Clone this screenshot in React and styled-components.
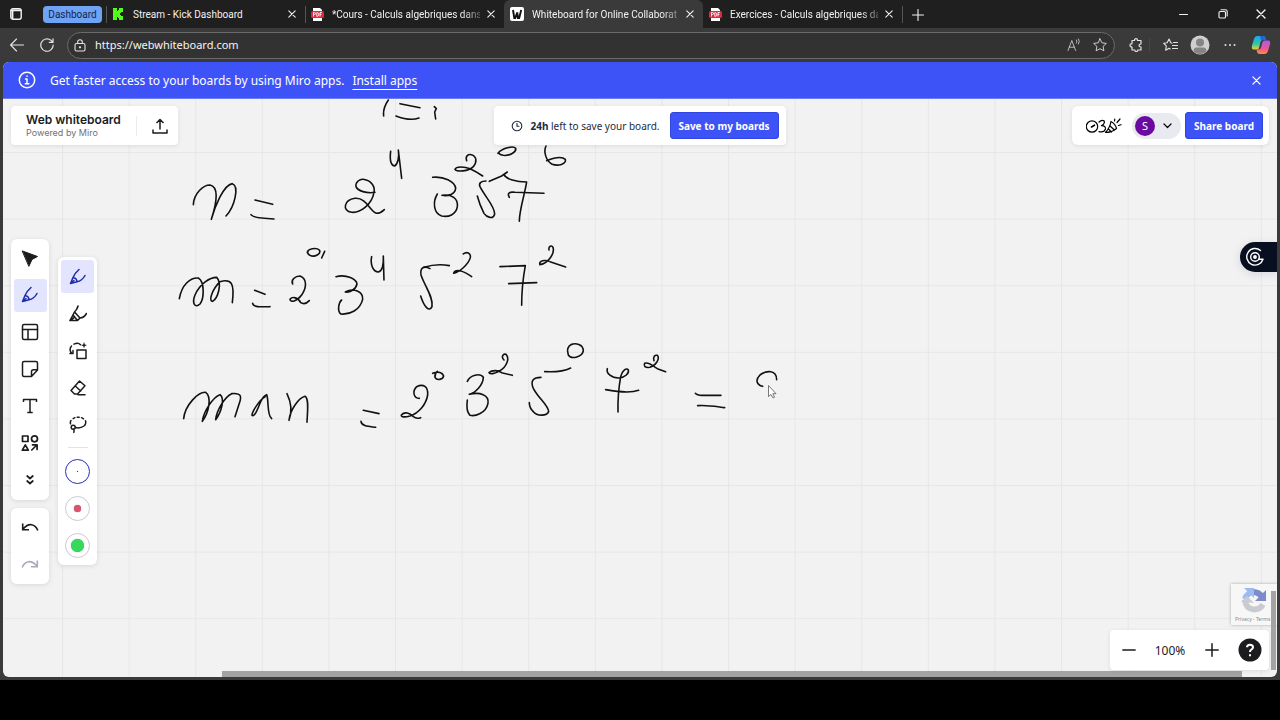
import React from "react";
import styled, { createGlobalStyle, css } from "styled-components";

const GlobalStyle = createGlobalStyle`
  *, *::before, *::after { box-sizing: border-box; }
  html, body { margin: 0; background: #000; }
  button, input { font: inherit; color: inherit; }
`;

const Page = styled.div`
  min-height: 100vh;
  display: flex;
  flex-direction: column;
  padding-bottom: 40px;
  background: #000;
  font-family: "Noto Sans", sans-serif;
`;

const BrowserWindow = styled.div`
  flex: 1;
  display: flex;
  flex-direction: column;
  background: #3a3a3a;
`;

const IconButton = styled.button`
  display: flex;
  align-items: center;
  justify-content: center;
  flex: none;
  width: ${(p) => p.$w || 20}px;
  height: ${(p) => p.$h || 20}px;
  padding: 0;
  border: 0;
  background: none;
  color: inherit;
`;

/* ---------- tab strip ---------- */

const TabStrip = styled.header`
  display: flex;
  align-items: stretch;
  height: 28px;
  background: #1f1f1f;
  color: #f2f2f2;
  font: 10px/27px Roboto, sans-serif;
`;

const TabMenu = styled.div`
  display: flex;
  align-items: center;
  gap: 19px;
  width: 106px;
  padding-left: 8px;
`;

const GroupChip = styled.button`
  height: 17px;
  padding: 0;
  width: 59px;
  border: 0;
  border-radius: 4px;
  background: #6ea3f5;
  color: #10254d;
  line-height: 17px;
`;

const Tab = styled.div`
  display: flex;
  align-items: center;
  gap: 8px;
  flex: 0 1 199px;
  min-width: 0;
  padding: 0 6px;
  position: relative;
  ${(p) =>
    p.$active
      ? css`
          background: #3a3a3a;
          border-radius: 6px 6px 0 0;
        `
      : css`
          &::before {
            content: "";
            position: absolute;
            left: 0;
            top: 6px;
            width: 1px;
            height: 17px;
            background: ${p.$plain ? "transparent" : "#555"};
          }
        `}
`;

const TabTitle = styled.span`
  flex: 1;
  min-width: 0;
  margin-right: -4px;
  white-space: nowrap;
  mask-image: ${(p) => (p.$fade ? "linear-gradient(to right, #000 88%, transparent 105%)" : "none")};
`;

const NewTab = styled.div`
  display: flex;
  align-items: center;
  padding-left: 5px;
  margin: 6px 0 5px;
  border-left: 1px solid #555;
`;

const WindowControls = styled.div`
  display: flex;
  align-items: center;
  margin-left: auto;
`;

/* ---------- address row ---------- */

const AddressRow = styled.div`
  display: flex;
  align-items: center;
  height: 34px;
  padding: 0 8px 0 7px;
  color: #e4e4e4;
`;

const NavButtons = styled.div`
  display: flex;
  gap: 10px;
`;

const AddressBox = styled.div`
  flex: 1;
  display: flex;
  align-items: center;
  height: 27px;
  margin: 0 8px 0 10px;
  padding: 0 1px 0 5px;
  border: 1px solid #6b6b6b;
  border-radius: 14px;
  background: #323232;
`;

const AddressInput = styled.input`
  flex: 1;
  min-width: 0;
  padding: 0 0 0 8px;
  border: 0;
  outline: 0;
  background: none;
  color: #f4f4f4;
  font: 11px/20px "Noto Sans", sans-serif;
`;

const Divider = styled.span`
  flex: none;
  width: 1px;
  height: ${(p) => p.$h || 12}px;
  background: ${(p) => p.$color || "#484848"};
`;

/* ---------- web page ---------- */

const Viewport = styled.div`
  flex: 1;
  display: flex;
  flex-direction: column;
  margin: 0 3px 3px;
  border-radius: 6px;
  overflow: hidden;
  background: #f2f2f2;
`;

const Banner = styled.div`
  display: flex;
  align-items: center;
  height: 37px;
  padding: 0 11px 0 15px;
  background: #3d53f8;
  border-bottom: 1px solid #6d7cf0;
  color: #fff;
  font-size: 12px;
  line-height: 17px;
`;

const BannerText = styled.span`
  margin: 0 8px 0 14px;
`;

const BannerLink = styled.a`
  color: #fff;
  text-decoration: underline 1px;
  text-underline-offset: 4px;
  text-decoration-skip-ink: none;
`;

const Push = styled.span`
  margin-left: auto;
`;

const Board = styled.main`
  flex: 1;
  position: relative;
  display: flex;
  flex-direction: column;
  padding: 7px 8px 0;
`;

const Ink = styled.svg`
  position: absolute;
  inset: 0;
  width: 100%;
  height: 100%;
`;

const TopPanels = styled.div`
  position: relative;
  display: grid;
  grid-template-columns: 1fr auto 1fr;
  align-items: center;
`;

const Panel = styled.section`
  display: flex;
  align-items: center;
  height: 39px;
  background: #fff;
  border-radius: 4px;
  box-shadow: 0 1px 4px rgba(30, 30, 50, 0.1);
`;

const TitlePanel = styled(Panel)`
  justify-self: start;
  padding: 0 1px 0 15px;
`;

const BoardName = styled.h1`
  margin: 0;
  color: #1c1c1e;
  font: 600 12px/14px Inter, sans-serif;
`;

const PoweredBy = styled.p`
  margin: 0;
  color: #6f7078;
  font: 9px/11px Inter, sans-serif;
`;

const TitleText = styled.div`
  margin-right: 15px;
`;

const ExportSlot = styled.div`
  margin-left: 7px;
`;

const SavePanel = styled(Panel)`
  padding: 0 7px 0 17px;
  color: #222a3f;
  font-size: 10px;
`;

const SaveText = styled.p`
  margin: 0 10px 0 7px;
`;

const PrimaryButton = styled.button`
  height: 27px;
  padding: 0;
  width: ${(p) => p.$w}px;
  border: 1px solid #2f45dd;
  border-radius: 3px;
  background: #3d53f8;
  color: #fff;
  font-size: 10px;
  font-weight: 700;
  white-space: nowrap;
`;

const SharePanel = styled(Panel)`
  justify-self: end;
  padding: 0 6px 0 14px;
  border-radius: 6px;
`;

const UserMenu = styled.button`
  display: flex;
  align-items: center;
  gap: 8px;
  height: 26px;
  width: 49px;
  margin: 0 4px 0 10px;
  padding: 0 0 0 3px;
  border: 0;
  border-radius: 13px;
  background: #e9eaef;
`;

const Avatar = styled.span`
  width: 20px;
  height: 20px;
  border-radius: 50%;
  background: #6a0aa0;
  color: #fff;
  font-size: 11px;
  line-height: 20px;
  text-align: center;
`;

const ToolArea = styled.div`
  position: relative;
  flex: 1;
  display: flex;
  align-items: center;
  align-self: flex-start;
  gap: 9px;
`;

const ToolColumn = styled.div`
  display: flex;
  flex-direction: column;
  gap: 8px;
`;

const ToolPanel = styled.nav`
  display: flex;
  flex-direction: column;
  align-items: center;
  gap: 4px;
  width: ${(p) => p.$w || 38}px;
  padding: 3px 2px;
  border-radius: 6px;
  background: #fff;
  box-shadow: 0 1px 5px rgba(30, 30, 50, 0.12);
`;

const ToolButton = styled.button`
  display: flex;
  align-items: center;
  justify-content: center;
  width: 33px;
  height: 33px;
  padding: 0;
  border: 0;
  border-radius: 3px;
  background: ${(p) => (p.$active ? "#e2e5fd" : "transparent")};
  color: ${(p) => (p.$active ? "#1f2ba8" : p.$muted ? "#a9abb8" : "#1c1c1e")};
`;

const ToolDivider = styled.hr`
  width: 20px;
  height: 1px;
  margin: 2px 0 3px;
  border: 0;
  background: #e1e2e8;
`;

const Swatch = styled.span`
  display: flex;
  align-items: center;
  justify-content: center;
  width: 25px;
  height: 25px;
  border-radius: 50%;
  border: ${(p) => (p.$selected ? "1px solid #2a2cc0" : "1px solid #c9cad0")};
  &::before {
    content: "";
    width: ${(p) => p.$dot}px;
    height: ${(p) => p.$dot}px;
    border-radius: 50%;
    background: ${(p) => p.$color};
    box-shadow: 0 0 1px rgba(0, 0, 0, 0.6);
  }
`;

const SideHandle = styled.button`
  position: absolute;
  right: 0;
  top: 143px;
  display: flex;
  align-items: center;
  width: 37px;
  height: 30px;
  padding: 0 0 0 5px;
  border: 0;
  border-radius: 15px 0 0 15px;
  background: #080f20;
  color: #fff;
  box-shadow: 0 2px 10px rgba(60, 60, 120, 0.15);
`;

const Captcha = styled.aside`
  position: absolute;
  right: 0;
  bottom: 52px;
  width: 46px;
  height: 41px;
  padding-left: 4px;
  background: #f7f7f7;
  box-shadow: 0 0 3px rgba(0, 0, 0, 0.3);
  color: #888;
  font: 5px/8px "Noto Sans", sans-serif;
  white-space: nowrap;
  svg { display: block; margin: 3px 0 1px 6px; opacity: 0.85; }
`;

const ZoomPanel = styled(Panel)`
  position: absolute;
  right: 8px;
  bottom: 7px;
  height: 40px;
  padding: 0 7px;
  color: #1c1c1e;
  font-size: 12px;
`;

const ZoomValue = styled.output`
  width: 58px;
  text-align: center;
`;

const HelpSlot = styled.div`
  margin-left: 13px;
`;

const Scrollbar = styled.div`
  position: absolute;
  background: #a3a3a3;
  ${(p) =>
    p.$vertical
      ? css`right: 1px; bottom: 7px; width: 5px; height: 79px;`
      : css`left: 219px; right: 35px; bottom: 0; height: 6px;`}
`;

/* ---------- icons ---------- */

const Svg = ({ s = 16, w = s, h = s, box, sw = 1.3, children, fill = "none" }) => (
  <svg width={w} height={h} viewBox={box || `0 0 ${w} ${h}`} fill={fill} stroke="currentColor"
    strokeWidth={sw} strokeLinecap="round" strokeLinejoin="round" aria-hidden="true">
    {children}
  </svg>
);

const CloseIcon = ({ s = 8 }) => (
  <Svg s={s} box="0 0 8 8" sw={1.1}><path d="M.8.8l6.4 6.4M7.2.8L.8 7.2" /></Svg>
);

const KickIcon = () => (
  <Svg w={13} h={12} sw={0} fill="#53fc18">
    <path d="M1 0h4v3h1V2h1V0h4v4H9v1H8v2h1v1h2v4H7v-2H6V9H5v3H1z" />
  </Svg>
);

const PdfIcon = () => (
  <svg width="13" height="13" viewBox="0 0 13 13" aria-hidden="true">
    <path d="M2 0h7l2 2v11H2z" fill="#fff" />
    <rect x="0" y="3" width="13" height="7" rx="1.5" fill="#e2273f" />
    <path d="M2.5 8.5v-4h1q1 0 1 1t-1 1h-1M5.8 4.6v3.8h.6q1.2 0 1.2-1.9T6.4 4.6zM9 8.5v-4h1.8M9 6.4h1.4" fill="none" stroke="#fff" strokeWidth=".9" />
  </svg>
);

const WIcon = () => (
  <svg width="14" height="14" viewBox="0 0 14 14" aria-hidden="true">
    <rect width="14" height="14" rx="2" fill="#fff" />
    <path d="M3 3l1.3 8h1L7.2 5.5 8 11h1.2L11.2 3" fill="none" stroke="#111" strokeWidth="1.9" />
  </svg>
);

const PenIcon = () => (
  <Svg s={18} sw={1.5}>
    <path d="M10 1.5Q6 5 4 9.500L1.500 15.500l6.500-1.700Q13 13 16 7.500M4 9.500q3.700.5 4 4.300M1.500 15.500l3.500-3" />
  </Svg>
);

const MarkerIcon = () => (
  <Svg s={18} sw={1.6}>
    <path d="M9 1Q8.500 4 5.500 7L1 15.500h7.500l2.500-2.500q4 0 6.500-4.500M5.500 7l5.500 6M4 10l4.500 5.500M1 15.500l3.500-2.500" />
  </Svg>
);

const SmartDrawIcon = () => (
  <Svg s={18} sw={1.5}>
    <path d="M2.8 11.5Q-.5 7.5 2.5 4M5 2.2q4-2 6.500.5M8 8h9v8.500H8zM1 11.500h3V8.500" />
    <path d="M15 .7l.7 1.800 1.800.7-1.800.7-.7 1.800-.7-1.800-1.800-.7 1.800-.7z" fill="currentColor" strokeWidth=".3" />
  </Svg>
);

const EraserIcon = () => (
  <Svg s={18} sw={1.5}>
    <path d="M10.500 2l5.500 4.800L8.500 15H5.500L2 11.500zM6 6.800l5.700 5.200M9 15.800h7" />
  </Svg>
);

const LassoIcon = () => (
  <Svg s={18} sw={1.5}>
    <path d="M1.500 7.800Q1 6 2 4.500M4.200 2.600l1.600-.9M8.200 1.200h2M12.600 1.700l1.900 1.100M16.500 4.800q1 3-1.500 5.200-3.500 2.600-8.600 1.600" />
    <circle cx="4.200" cy="11.200" r="2" />
    <path d="M4.600 13.200q1 1.600.2 3.200" />
  </Svg>
);

const CursorIcon = () => (
  <Svg s={18} sw={1} fill="currentColor"><path d="M1.500 2l15 5.500-5.500 3-3 6.500z" /></Svg>
);

const TemplateIcon = () => (
  <Svg s={18} sw={1.5}><rect x="1.5" y="1.5" width="15" height="15" rx="1.5" /><path d="M1.5 6.5h15M7 6.5v10" /></Svg>
);

const NoteIcon = () => (
  <Svg s={18} sw={1.5}><path d="M3 1.500h12q1.500 0 1.500 1.500v7l-6 6.500H3Q1.500 16.500 1.500 15V3Q1.500 1.500 3 1.500zM16.500 9.800h-4q-2 0-2 2v4.700" /></Svg>
);

const TextIcon = () => (
  <Svg s={18} sw={1.5}><path d="M2.500 5V2.500h13V5M9 2.500v13M6.300 15.500h5.400" strokeLinecap="butt" /></Svg>
);

const ShapesIcon = () => (
  <Svg s={18} sw={1.7}>
    <rect x="1.5" y="2" width="5.5" height="5.5" /><circle cx="13.5" cy="4.8" r="3" />
    <path d="M4.300 10.800l3 5.400h-6zM10.800 16l5-5M11.500 10.800h4.600v4.600" />
  </Svg>
);

const MoreIcon = () => (
  <Svg w={8} h={12} sw={1.7}><path d="M1.200 2L4 4.500 6.800 2M1.200 7L4 9.500 6.800 7" /></Svg>
);

const UndoIcon = ({ flip }) => (
  <svg width="18" height="12" viewBox="0 0 18 12" fill="none" stroke="currentColor" strokeWidth="1.6" aria-hidden="true">
    <path transform={flip ? "translate(18 0) scale(-1 1)" : undefined} d="M1.700 2.500v6.200h6.300M1.800 8.500Q6 3 10.500 3.700T16.800 9.500" />
  </svg>
);

const CopilotIcon = () => (
  <svg width="20" height="20" viewBox="0 0 20 20" aria-hidden="true">
    <defs>
      <linearGradient id="cpl" x1="0" y1="0" x2="0" y2="1">
        <stop offset="0" stopColor="#1aa5f5" /><stop offset=".6" stopColor="#35c6a0" /><stop offset="1" stopColor="#f2cf32" />
      </linearGradient>
      <linearGradient id="cpr" x1="0" y1="0" x2="0" y2="1">
        <stop offset="0" stopColor="#a35cf0" /><stop offset=".6" stopColor="#f0558d" /><stop offset="1" stopColor="#fb8c4e" />
      </linearGradient>
    </defs>
    <path d="M6 1h6q2 0 2.500 2l.5 2h-3q-2 0-2.500 2L8 13q-.5 1.500-2 1.500H3q-3 0-2-4L3 4q.8-3 3-3z" fill="url(#cpl)" />
    <path d="M14 19H8.500q-2 0-2.500-2l-.5-2.500h2q2 0 2.500-2l1.500-5.500q.5-1.500 2-1.500H17q3 0 2 4L17 16q-.8 3-3 3z" fill="url(#cpr)" />
    <path d="M9 1h3q2 0 2.500 2l.5 2h-3q-1.500 0-2 1z" fill="#2166d8" />
  </svg>
);

const DoodleIcon = () => (
  <Svg w={36} h={18} sw={1.2}>
    <circle cx="6" cy="9.500" r="5.700" />
    <path d="M5.500 10l3-1.800" strokeWidth="1.6" />
    <path d="M13 5q3-2.800 5.200-1 1 2.500-2.700 4.700 4.200 0 4 3.200-1.200 4-6.500 2.800" />
    <path d="M25 4.500Q24 10.500 19.500 15.500q6.500 0 11-4Q29.500 7 25 4.500zM24 9l4.500 4M22.500 12l2.800 3" />
    <path d="M28.500 4l.3-2M31 5.500l3-3.500M32.500 8.500l2.500-.8" />
  </Svg>
);

const ProfileIcon = () => (
  <svg width="20" height="20" viewBox="0 0 20 20" aria-hidden="true">
    <circle cx="10" cy="10" r="9.5" fill="#cfcfcf" />
    <circle cx="10" cy="7.5" r="4" fill="#858585" />
    <path d="M3.500 16.500q0-4 3-4h7q3 0 3 4Q10 21.500 3.500 16.500z" fill="#858585" />
  </svg>
);

const CaptchaIcon = () => (
  <svg width="26" height="27" viewBox="0 0 26 27" fill="none" aria-hidden="true">
    <path d="M4 12A9.500 9.500 0 0 1 13 5" stroke="#8cb1f0" strokeWidth="6" />
    <path d="M12 5Q18 5 21 10" stroke="#6878c4" strokeWidth="6" />
    <path d="M25 3v11H14z" fill="#6878c4" />
    <path d="M3 1h10v10z" fill="#8cb1f0" />
    <path d="M4 13q1 9 9 9.500 6 0 9-5" stroke="#c2c4ca" strokeWidth="6" />
    <path d="M0 15l6-6 7 7z" fill="#c2c4ca" />
  </svg>
);

/* ---------- handwriting ---------- */

const strokes = [
  { x: 170, y: 90, paths: [
    "M70 344C72 310 100 285 120 285C145 290 143 330 124 388C135 350 160 285 187 281C208 288 195 350 168 378",
    "M255 330L308 343", "M243 374Q250 385 312 387",
    "M615 307C590 311 563 303 558 290C556 275 570 267 580 268C605 272 616 290 612 308C605 345 570 370 545 367C515 362 522 330 555 325C590 322 600 365 620 370Q632 370 643 359",
  ]},
  { x: 370, y: 90, paths: [
    "M55 30Q38 55 41 78", "M90 41L150 53", "M78 78Q120 94 147 84", "M193 50L199 56L194 66L197 87",
    "M62 184C58 215 65 228 74 228C84 222 88 200 85 180L95 265",
    "M188 262C220 258 255 275 257 295C255 312 235 320 216 316C245 312 265 325 262 350C258 375 235 382 215 378C190 370 188 335 202 312",
    "M290 212C285 198 295 192 304 194C320 198 322 215 310 230C295 245 260 246 255 238C258 228 285 230 300 236Q318 244 338 258",
    "M384 190C395 175 430 166 437 175C440 188 415 198 400 196C388 194 385 190 388 185",
    "M528 168C520 185 528 212 545 222C565 230 590 222 586 208C575 198 548 205 530 212",
    "M348 273C335 273 325 278 330 290C345 320 375 350 374 372C370 390 350 382 342 370C332 350 325 330 322 318",
    "M358 274L395 258L412 246", "M402 254C408 268 440 276 470 276C465 310 448 360 448 394",
    "M418 322C410 308 420 305 435 307L522 310",
    "M180 536C160 525 150 535 153 555C165 590 190 620 186 650C178 668 162 650 152 618", "M162 532Q200 520 238 527",
    "M280 492C290 484 303 488 301 503C295 525 265 548 251 550C255 538 275 538 305 560",
    "M390 530L466 527C460 560 455 610 455 646", "M416 581L500 578",
    "M537 480C535 468 545 465 549 472C555 490 535 520 510 524C505 512 525 508 540 515L587 531",
  ]},
  { x: 170, y: 230, paths: [
    "M412 68C412 55 440 52 448 60C455 72 435 80 425 78C415 75 410 68 415 62", "M464 64L455 84",
    "M605 80C600 105 610 125 625 126C640 122 641 100 640 78L642 150",
    "M28 206C35 165 60 142 85 144C104 155 103 205 90 222C75 236 65 220 75 195C90 160 120 142 140 142C158 160 143 205 128 214C115 215 125 180 150 155C185 145 194 160 187 218",
    "M254 181L285 193", "M248 220C250 232 270 231 300 230",
    "M368 162C362 150 375 138 390 138C410 145 412 170 395 195C380 215 362 218 360 208C368 198 385 203 392 218Q405 226 418 212",
    "M498 140C530 132 560 148 561 162C558 178 540 188 526 186C550 172 580 185 578 208C570 240 540 255 512 252C500 240 508 215 515 210",
    "M41 566C45 525 85 485 107 487C125 500 118 545 97 574C100 545 130 500 150 494C165 505 155 545 137 569C140 540 165 500 185 491C215 488 215 500 208 520L195 560",
    "M286 500C268 510 246 545 246 556C254 562 264 535 272 515Q280 498 290 494C297 510 290 555 305 566",
    "M351 491C365 520 365 550 357 571C360 540 385 505 405 499C418 505 412 550 411 577",
    "M580 541L627 551", "M573 574C575 588 590 589 617 592",
  ]},
  { x: 390, y: 330, paths: [
    "M88 205C72 205 65 185 80 170C100 160 115 170 113 195C108 225 85 250 60 258C45 262 33 262 34 255C45 243 60 250 70 260Q80 268 92 263",
    "M128 130C140 125 155 125 161 138C158 150 140 152 135 142Q133 132 142 124",
    "M232 154C240 135 270 128 280 142C280 165 255 190 238 193C270 185 298 195 294 220C288 250 255 260 240 256C228 245 230 225 232 210",
    "M342 90C332 80 340 70 348 73C360 85 350 110 330 122C315 132 298 134 297 128C305 120 325 120 335 128L367 136",
    "M453 142C430 142 420 152 430 175C445 205 475 225 476 245C470 260 440 258 430 245C420 235 418 225 418 218",
    "M464 125C500 127 530 120 542 114",
    "M543 44C556 38 580 42 580 62C578 80 545 90 535 75C530 60 535 48 545 43",
  ]},
  { x: 580, y: 340, paths: [
    "M82 86C78 100 95 115 118 114C135 112 148 100 145 90C140 82 127 90 122 110C115 150 113 180 114 216",
    "M77 149C110 155 150 160 176 151",
    "M222 62C218 50 225 44 232 46C240 55 230 75 210 82C195 84 190 78 194 70C205 65 220 78 232 86L257 95",
    "M346 160Q352 167 370 166L423 166", "M353 197C380 194 410 200 434 203",
    "M548 139C530 135 525 120 540 105C560 90 590 90 590 119",
  ]},
];

const Drawing = () => (
  <Ink role="img" aria-label="Handwritten prime factorisations on the board">
    <defs>
      <pattern id="grid" width="66.6" height="66.6" x="59" y="53" patternUnits="userSpaceOnUse">
        <path d="M0 .5H66.6M.5 0V66.6" stroke="#e7e7e9" strokeWidth="1.2" />
      </pattern>
    </defs>
    <rect width="100%" height="100%" fill="url(#grid)" />
    <g transform="translate(-3 -99)">
      {strokes.map((g, i) => (
        <g key={i} transform={`translate(${g.x} ${g.y}) scale(.3333)`} fill="none" stroke="#111" strokeWidth="4.8" strokeLinecap="round" strokeLinejoin="round">
          {g.paths.map((d) => <path key={d} d={d} />)}
        </g>
      ))}
      <path transform="translate(768.5 385.5)" d="M0 0V11L2.5 9L4.5 12.5L6 11.7L4.3 8.200H7.500Z" fill="#fff" stroke="#555" strokeWidth=".8" />
    </g>
  </Ink>
);

const tabs = [
  { title: "Stream - Kick Dashboard", Icon: KickIcon },
  { title: "*Cours - Calculs algebriques dans", Icon: PdfIcon, fade: true },
  { title: "Whiteboard for Online Collaborat", Icon: WIcon, fade: true, active: true },
  { title: "Exercices - Calculs algebriques da", Icon: PdfIcon, fade: true, plain: true },
];

const mainTools = [
  ["Select", CursorIcon], ["Pen", PenIcon, true], ["Templates", TemplateIcon], ["Sticky note", NoteIcon],
  ["Text", TextIcon], ["Shapes", ShapesIcon], ["More", MoreIcon],
];

const penTools = [
  ["Pen", PenIcon, true], ["Highlighter", MarkerIcon], ["Smart drawing", SmartDrawIcon],
  ["Eraser", EraserIcon], ["Lasso", LassoIcon],
];

const swatches = [
  { name: "Black", color: "#1c1c1e", dot: 1, selected: true },
  { name: "Red", color: "#e04f6e", dot: 7 },
  { name: "Green", color: "#35d95c", dot: 13 },
];

const renderTools = (list) =>
  list.map(([name, Icon, active]) => (
    <ToolButton key={name} $active={active} aria-label={name}><Icon /></ToolButton>
  ));

export default function App() {
  return (
    <Page>
      <GlobalStyle />
      <BrowserWindow>
        <TabStrip>
          <TabMenu>
            <IconButton $w={16} aria-label="Tab actions">
              <Svg s={12} sw={1.4}><rect x=".8" y=".8" width="10.4" height="10.4" rx="2" /><path d="M1.500 2.300h9M2.500 3v7.500" strokeWidth="1.8" /></Svg>
            </IconButton>
            <GroupChip>Dashboard</GroupChip>
          </TabMenu>
          {tabs.map(({ title, Icon, fade, active, plain }) => (
            <Tab key={title} $active={active} $plain={plain}>
              <Icon />
              <TabTitle $fade={fade}>{title}</TabTitle>
              <IconButton $w={14} aria-label={`Close ${title}`}><CloseIcon /></IconButton>
            </Tab>
          ))}
          <NewTab>
            <IconButton aria-label="New tab"><Svg s={12} sw={1.1}><path d="M6 .5v11M.5 6h11" /></Svg></IconButton>
          </NewTab>
          <WindowControls>
            <IconButton $w={39} aria-label="Minimize"><Svg s={10} sw={1}><path d="M.5 5.500h8" /></Svg></IconButton>
            <IconButton $w={39} aria-label="Restore"><Svg s={10} sw={1.1}><rect x="1" y="2.5" width="6.5" height="6.5" rx="1" /><path d="M3 .8h4.500q1.700 0 1.700 1.700V7" /></Svg></IconButton>
            <IconButton $w={38} aria-label="Close window"><CloseIcon s={10} /></IconButton>
          </WindowControls>
        </TabStrip>

        <AddressRow>
          <NavButtons>
            <IconButton aria-label="Back"><Svg s={14} sw={1.1}><path d="M13.500 7H.8M6.500 1L.6 7l5.900 6" /></Svg></IconButton>
            <IconButton aria-label="Reload"><Svg s={14} sw={1.2}><path d="M13.200 7A6.200 6.200 0 1 1 11 2.300L13 4.300M13 .8v3.600H9.300" /></Svg></IconButton>
          </NavButtons>
          <AddressBox>
            <IconButton $w={14} aria-label="Site information"><Svg w={12} h={13} sw={1.1}><rect x="1" y="4.5" width="10" height="7.5" rx="1.5" /><path d="M3.700 4.500V3q0-2.300 2.300-2.300T8.300 3v1.500" /><circle cx="6" cy="8.3" r=".6" /></Svg></IconButton>
            <AddressInput aria-label="Address" defaultValue="https://webwhiteboard.com" />
            <IconButton $w={26} aria-label="Read aloud"><Svg s={14} sw={1}><path d="M1 12.500L4.800 2.500l3.800 10M2.300 9.200h5M9.500 2q1 1.500 0 3M11.500 1q1.700 2.500 0 5" opacity=".75" /></Svg></IconButton>
            <IconButton $w={26} aria-label="Add to favourites"><Svg s={14} sw={1}><path d="M7 .8l1.900 4 4.400.6-3.200 3 .8 4.400L7 10.700l-3.900 2.100.8-4.400-3.200-3 4.400-.6z" opacity=".85" /></Svg></IconButton>
          </AddressBox>
          <IconButton $w={26} aria-label="Extensions"><Svg s={14} sw={1.2}><path d="M3 2.500h2.500q0-1.800 1.500-1.800t1.500 1.800H12V6q-2 0-2 1.500T12 9v3H8.800q0 1.500-1.500 1.500T5.800 12H3V9Q1 9 1 7.300T3 5.800z" /></Svg></IconButton>
          <Divider $h={14} />
          <IconButton $w={40} aria-label="Favourites"><Svg w={15} h={14} sw={1.1}><path d="M9 5.200L7.800 4.800 6 1 4.200 4.800.7 5.300l2.600 2.600-.6 4.300L6 10.200l1.200.7M10.500 4.500h4M9.500 7.500h5M9.500 10.500h5" /></Svg></IconButton>
          <IconButton aria-label="Profile"><ProfileIcon /></IconButton>
          <IconButton $w={40} aria-label="Settings and more"><Svg w={12} h={4} sw={0} fill="currentColor"><circle cx="1.5" cy="2" r="1" /><circle cx="6" cy="2" r="1" /><circle cx="10.5" cy="2" r="1" /></Svg></IconButton>
          <IconButton $w={22} aria-label="Copilot"><CopilotIcon /></IconButton>
        </AddressRow>

        <Viewport>
          <Banner>
            <Svg s={18} sw={1.5}><circle cx="9" cy="9" r="7.7" /><path d="M7.500 8H9v4.500M7.300 12.700h3.600M9 5v.3" /></Svg>
            <BannerText>Get faster access to your boards by using Miro apps.</BannerText>
            <BannerLink href="#install">Install apps</BannerLink>
            <Push />
            <IconButton aria-label="Dismiss"><CloseIcon s={9} /></IconButton>
          </Banner>

          <Board>
            <Drawing />
            <TopPanels>
              <TitlePanel>
                <TitleText>
                  <BoardName>Web whiteboard</BoardName>
                  <PoweredBy>Powered by Miro</PoweredBy>
                </TitleText>
                <Divider $h={20} $color="#ececf0" />
                <ExportSlot>
                  <ToolButton aria-label="Export"><Svg s={16} sw={1.5}><path d="M1 11.500V15h14v-3.500M8 11.500V1.500M4.500 5L8 1.500 11.500 5" strokeLinecap="butt" /></Svg></ToolButton>
                </ExportSlot>
              </TitlePanel>
              <SavePanel>
                <Svg s={12} sw={1.1}><circle cx="6" cy="6" r="4.8" /><path d="M6 3.300V6.300H8" /></Svg>
                <SaveText><b>24h</b> left to save your board.</SaveText>
                <PrimaryButton $w={109}>Save to my boards</PrimaryButton>
              </SavePanel>
              <SharePanel>
                <DoodleIcon />
                <UserMenu aria-label="Account S">
                  <Avatar>S</Avatar>
                  <Svg w={9} h={6} sw={1.2}><path d="M1 1l3.500 3.500L8 1" /></Svg>
                </UserMenu>
                <PrimaryButton $w={78}>Share board</PrimaryButton>
              </SharePanel>
            </TopPanels>

            <ToolArea>
              <ToolColumn>
                <ToolPanel aria-label="Tools">{renderTools(mainTools)}</ToolPanel>
                <ToolPanel aria-label="History">
                  <ToolButton aria-label="Undo"><UndoIcon /></ToolButton>
                  <ToolButton aria-label="Redo" $muted><UndoIcon flip /></ToolButton>
                </ToolPanel>
              </ToolColumn>
              <ToolPanel $w={39} aria-label="Pen options">
                {renderTools(penTools)}
                <ToolDivider />
                {swatches.map((s) => (
                  <ToolButton key={s.name} aria-label={s.name}>
                    <Swatch $color={s.color} $dot={s.dot} $selected={s.selected} />
                  </ToolButton>
                ))}
              </ToolPanel>
            </ToolArea>

            <SideHandle aria-label="Open side panel">
              <Svg s={20} sw={1.4}><path d="M15.500 3.500A8.300 8.300 0 1 0 18 12.200H13.500" /><circle cx="10" cy="10" r="4.3" /><circle cx="10" cy="10" r="1.2" fill="currentColor" /></Svg>
            </SideHandle>
            <Captcha><CaptchaIcon />Privacy - Terms</Captcha>
            <Scrollbar $vertical />
            <Scrollbar />
            <ZoomPanel>
              <IconButton $w={24} aria-label="Zoom out"><Svg s={14} sw={1.3}><path d="M.8 7h12.400" /></Svg></IconButton>
              <ZoomValue>100%</ZoomValue>
              <IconButton $w={26} aria-label="Zoom in"><Svg s={14} sw={1.5}><path d="M.8 7h12.400M7 .8v12.400" /></Svg></IconButton>
              <HelpSlot>
                <IconButton $w={24} $h={24} aria-label="Help">
                  <svg width="24" height="24" viewBox="0 0 24 24" aria-hidden="true"><circle cx="12" cy="12" r="11.5" fill="#1c1c1e" /><path d="M9 9.300Q9 6.800 12 6.800t3 2.500q0 1.500-1.700 2.300Q12 12.200 12 14M12 16.300v2" fill="none" stroke="#fff" strokeWidth="2" /></svg>
                </IconButton>
              </HelpSlot>
            </ZoomPanel>
          </Board>
        </Viewport>
      </BrowserWindow>
    </Page>
  );
}
